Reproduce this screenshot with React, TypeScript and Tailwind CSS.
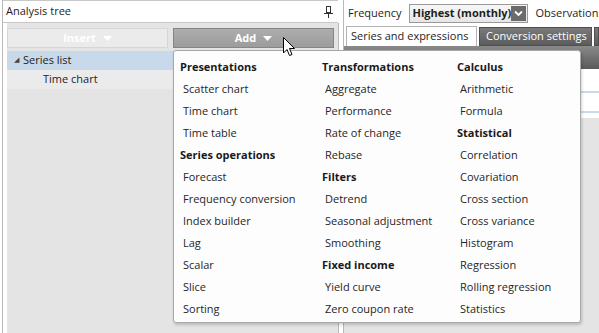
const font = { fontFamily: '"Open Sans", "Noto Sans", sans-serif' };

const col1: [string, boolean][] = [
  ["Presentations", true],
  ["Scatter chart", false],
  ["Time chart", false],
  ["Time table", false],
  ["Series operations", true],
  ["Forecast", false],
  ["Frequency conversion", false],
  ["Index builder", false],
  ["Lag", false],
  ["Scalar", false],
  ["Slice", false],
  ["Sorting", false],
];

const col2: [string, boolean][] = [
  ["Transformations", true],
  ["Aggregate", false],
  ["Performance", false],
  ["Rate of change", false],
  ["Rebase", false],
  ["Filters", true],
  ["Detrend", false],
  ["Seasonal adjustment", false],
  ["Smoothing", false],
  ["Fixed income", true],
  ["Yield curve", false],
  ["Zero coupon rate", false],
];

const col3: [string, boolean][] = [
  ["Calculus", true],
  ["Arithmetic", false],
  ["Formula", false],
  ["Statistical", true],
  ["Correlation", false],
  ["Covariation", false],
  ["Cross section", false],
  ["Cross variance", false],
  ["Histogram", false],
  ["Regression", false],
  ["Rolling regression", false],
  ["Statistics", false],
];

function MenuColumn({ items, width }: { items: [string, boolean][]; width: string }) {
  return (
    <div className={`flex flex-col ${width}`}>
      {items.map(([label, heading]) => (
        <div
          key={label}
          className={
            heading
              ? "h-[22px] flex items-center font-bold text-[#1a1a1a] whitespace-nowrap"
              : "h-[22px] flex items-center pl-[3px] text-[#262626] whitespace-nowrap"
          }
        >
          {label}
        </div>
      ))}
    </div>
  );
}

function Pin() {
  return (
    <svg width="9" height="12" viewBox="0 0 9 12" className="text-[#333]">
      <rect x="2.5" y="0.5" width="4" height="6" fill="none" stroke="currentColor" />
      <line x1="0" y1="7.5" x2="9" y2="7.5" stroke="currentColor" />
      <line x1="4.5" y1="8" x2="4.5" y2="12" stroke="currentColor" />
    </svg>
  );
}

function DownArrow() {
  return (
    <svg width="9" height="5" viewBox="0 0 9 5">
      <path d="M0 0 L9 0 L4.5 5 Z" fill="#fff" />
    </svg>
  );
}

function Cursor() {
  return (
    <svg width="13" height="21" viewBox="0 0 13 21">
      <path
        d="M0.5 0.5 L0.5 16 L4 12.5 L6.5 18.5 L9 17.5 L6.5 11.5 L11.5 11.5 Z"
        fill="#fff"
        stroke="#000"
        strokeWidth="1"
        strokeLinejoin="round"
      />
    </svg>
  );
}

export default function App() {
  return (
    <div className="relative w-[599px] h-[333px] overflow-hidden bg-white flex text-[11px]" style={font}>
      {/* left: analysis tree */}
      <div className="ml-[2px] w-[336px] shrink-0 border-l border-[#b9b9b9] flex flex-col">
        <div className="h-[23px] shrink-0 border-b border-t border-[#c8c8c8] flex items-center justify-between pl-[3px] pr-[5px] text-[#1e1e1e]">
          <span>Analysis tree</span>
          <Pin />
        </div>
        <div className="flex-1 pl-[4px] flex">
          <div className="flex-1 bg-[#e4e4e4] flex flex-col">
            <div className="flex gap-[5px] pt-[5px] pr-[2px]">
              <div className="w-[161px] h-[20px] bg-[#ebebeb] border border-[#d6d6d6] flex items-center justify-center gap-[7px] font-bold text-white">
                <span>Insert</span>
                <DownArrow />
              </div>
              <div className="w-[161px] h-[20px] bg-gradient-to-b from-[#adadad] to-[#9c9c9c] border border-[#858585] flex items-center justify-center gap-[7px] font-bold text-white">
                <span>Add</span>
                <DownArrow />
              </div>
            </div>
            <div className="mt-[3px] flex flex-col text-[#1e1e1e]">
              <div className="h-[19px] bg-[#c7d9ea] flex items-center pl-[7px] gap-[4px]">
                <span className="text-[7px] text-[#444]">◢</span>
                <span>Series list</span>
              </div>
              <div className="h-[19px] bg-[#ebebeb] flex items-center pl-[36px]">Time chart</div>
            </div>
          </div>
        </div>
      </div>

      {/* splitter */}
      <div className="w-[6px] shrink-0 flex border-r border-[#b9b9b9]">
        <div className="w-px bg-[#b9b9b9] mt-[23px]" />
      </div>

      {/* right: series settings */}
      <div className="flex-1 min-w-0 overflow-hidden flex flex-col">
        <div className="h-[26px] shrink-0 flex items-center pl-[4px] text-[#1e1e1e] whitespace-nowrap">
          <span>Frequency</span>
          <div className="ml-[7px] h-[19px] w-[119px] shrink-0 border border-[#9a9a9a] bg-gradient-to-b from-[#f7f7f7] to-[#e6e6e6] flex items-center justify-between pl-[3px] pr-px">
            <span className="font-bold">Highest (monthly)</span>
            <div className="w-[16px] h-[15px] bg-[#6b6b6b] flex items-center justify-center">
              <svg width="9" height="7" viewBox="0 0 9 7">
                <path d="M1 1.5 L4.5 5 L8 1.5" fill="none" stroke="#fff" strokeWidth="1.8" />
              </svg>
            </div>
          </div>
          <span className="ml-[8px]">Observations</span>
        </div>
        <div className="h-[20px] shrink-0 flex items-end gap-[2px] pl-[2px] whitespace-nowrap">
          <div className="h-[20px] w-[131px] shrink-0 border border-b-0 border-[#b4b4b4] bg-white flex items-center pl-[4px] text-[#1e1e1e]">
            Series and expressions
          </div>
          <div className="h-[19px] w-[113px] shrink-0 bg-gradient-to-b from-[#7a7a7a] to-[#5c5c5c] border border-[#4f4f4f] flex items-center pl-[6px] text-white">
            Conversion settings
          </div>
          <div className="h-[19px] flex-1 bg-gradient-to-b from-[#7a7a7a] to-[#5c5c5c] border border-[#4f4f4f]" />
        </div>
        <div className="h-[23px] shrink-0 bg-gradient-to-b from-[#8a8a8a] to-[#5a5a5a]" />
        <div className="h-[49px] shrink-0 bg-white flex flex-col">
          <div className="h-[24px] border-b-2 border-[#c9dbea]" />
          <div className="h-[20px] border-b-2 border-[#c9dbea]" />
        </div>
        <div className="flex-1 bg-[#e4e4e4]" />
      </div>

      {/* Add dropdown menu */}
      <div className="absolute left-[173px] top-[50px] w-[408px] h-[273px] bg-[#fdfdfe] border border-[#a8a8a8] rounded-[3px] shadow-[1px_2px_3px_rgba(0,0,0,0.18)] pt-[5px] pl-[6px] flex">
        <MenuColumn items={col1} width="w-[142px]" />
        <MenuColumn items={col2} width="w-[135px]" />
        <MenuColumn items={col3} width="w-[118px]" />
      </div>

      {/* mouse pointer */}
      <div className="absolute left-[283px] top-[37px]">
        <Cursor />
      </div>
    </div>
  );
}
